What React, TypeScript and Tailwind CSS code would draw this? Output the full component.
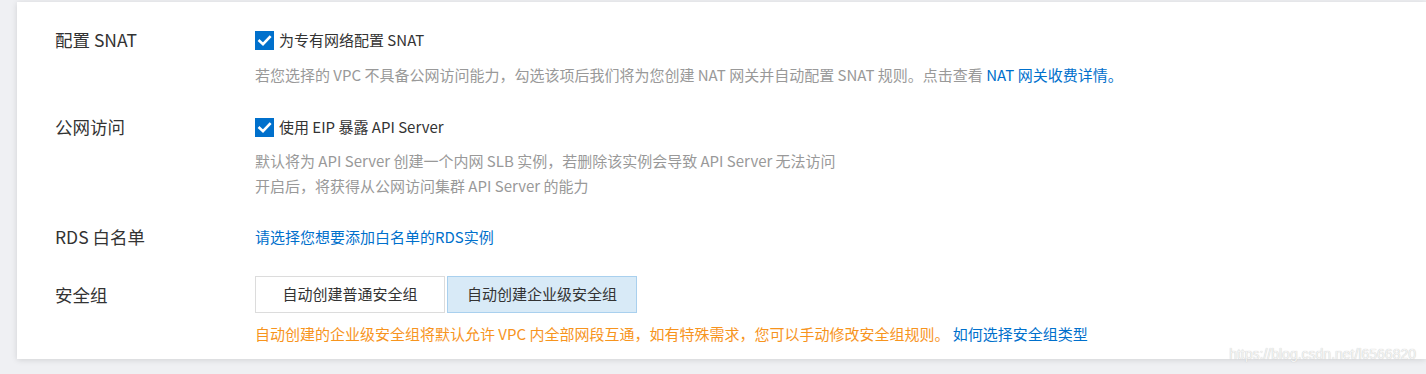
import React from "react";

const font = {
  fontFamily: '"Noto Sans CJK SC", "Noto Sans", sans-serif',
};

function Check() {
  return (
    <span className="inline-flex h-[19px] w-[19px] shrink-0 items-center justify-center bg-[#0070cc]">
      <svg width="15" height="15" viewBox="0 0 12 12">
        <path d="M2 6.3 L4.8 9 L10.2 3.2" stroke="#fff" strokeWidth="2.1" fill="none" strokeLinecap="square" />
      </svg>
    </span>
  );
}

function Label({ children }: { children: React.ReactNode }) {
  return <div className="w-[200px] shrink-0 text-[17.5px] leading-[24px] text-[#333]">{children}</div>;
}

export default function App() {
  return (
    <div className="relative min-h-[374px] w-full overflow-hidden bg-[#eff0f3] pt-[2px] pl-[17px]" style={font}>
      <div className="bg-white pl-[38px] pt-[26px] pb-[13px] shadow-[0_1px_6px_rgba(0,0,0,0.13)]">
        {/* Row 1 */}
        <div className="flex">
          <Label>配置 SNAT</Label>
          <div>
            <div className="flex h-6 items-center gap-[5px] text-[15px] text-[#333]">
              <Check />
              <span>为专有网络配置 SNAT</span>
            </div>
            <div className="mt-[11px] text-[15px] leading-[24px] text-[#999]">
              若您选择的 VPC 不具备公网访问能力，勾选该项后我们将为您创建 NAT 网关并自动配置 SNAT 规则。点击查看{" "}
              <span className="text-[#0070cc]">NAT 网关收费详情。</span>
            </div>
          </div>
        </div>
        {/* Row 2 */}
        <div className="mt-[28px] flex">
          <Label>公网访问</Label>
          <div>
            <div className="flex h-6 items-center gap-[5px] text-[15px] text-[#333]">
              <Check />
              <span>使用 EIP 暴露 API Server</span>
            </div>
            <div className="mt-[9px] text-[15px] leading-[25px] text-[#999]">
              <div>默认将为 API Server 创建一个内网 SLB 实例，若删除该实例会导致 API Server 无法访问</div>
              <div>开启后，将获得从公网访问集群 API Server 的能力</div>
            </div>
          </div>
        </div>
        {/* Row 3 */}
        <div className="mt-[27px] flex">
          <Label>RDS 白名单</Label>
          <div className="text-[15px] leading-[24px] text-[#0070cc]">请选择您想要添加白名单的RDS实例</div>
        </div>
        {/* Row 4 */}
        <div className="mt-[27px] flex">
          <div className="flex h-[37px] items-center">
            <Label>安全组</Label>
          </div>
          <div>
            <div className="flex">
              <div className="flex h-[37px] w-[190px] items-center justify-center border border-[#dcdcdc] bg-white text-[15px] text-[#333]">
                自动创建普通安全组
              </div>
              <div className="ml-[2px] flex h-[37px] w-[190px] items-center justify-center border border-[#a9d0ee] bg-[#d8eaf7] text-[15px] text-[#333]">
                自动创建企业级安全组
              </div>
            </div>
            <div className="mt-[9px] text-[15px] leading-[24px] text-[#f7941d]">
              自动创建的企业级安全组将默认允许 VPC 内全部网段互通，如有特殊需求，您可以手动修改安全组规则。{" "}
              <span className="text-[#0070cc]">如何选择安全组类型</span>
            </div>
          </div>
        </div>
      </div>
      <div
        className="absolute right-[10px] top-[344px] text-[14px] leading-[20px] text-[#f4f4f4]"
        style={{ fontFamily: '"Liberation Sans", sans-serif', textShadow: "0 0 1px #b8b8b8" }}
      >
        https://blog.csdn.net/l6566820
      </div>
    </div>
  );
}
